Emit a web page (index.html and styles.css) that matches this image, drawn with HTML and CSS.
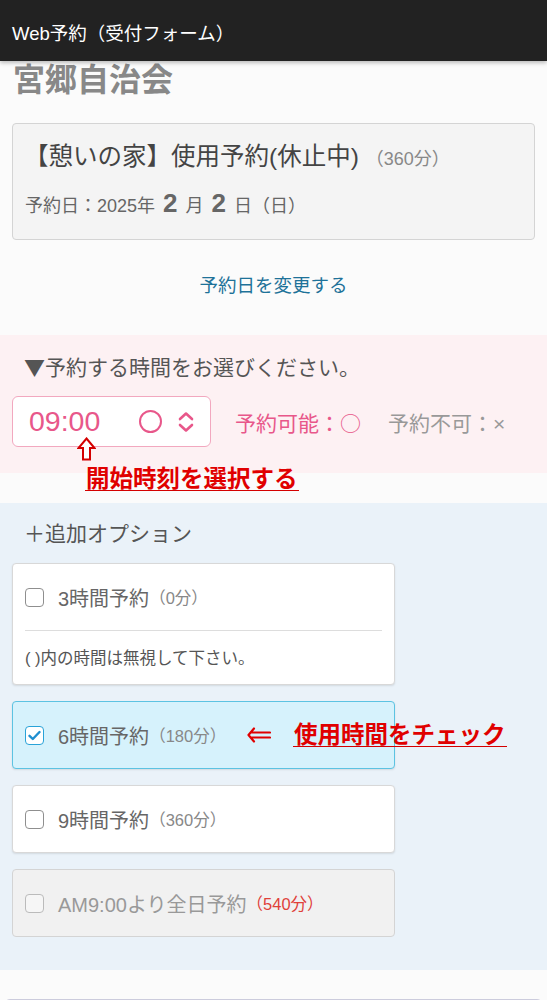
FILE: index.html
```html
<!DOCTYPE html>
<html lang="ja">
<head>
<meta charset="utf-8">
<title>Web予約（受付フォーム）</title>
<link rel="stylesheet" href="styles.css">
</head>
<body>
<header class="appbar">Web予約（受付フォーム）</header>
<main class="page">
  <h1 class="org">宮郷自治会</h1>
  <div class="facility">
    <div class="facility-title">【憩いの家】使用予約(休止中)<span class="mins">（360分）</span></div>
    <div class="facility-date">予約日：2025年 <b class="big">2</b> 月 <b class="big">2</b> 日（日）</div>
  </div>
  <div class="change-row"><a class="change-link">予約日を変更する</a></div>

  <section class="time-sec">
    <div class="sec-title"><span class="cj">▼</span>予約する時間をお選びください。</div>
    <div class="time-row">
      <div class="time-select">
        <span class="time-val">09:00</span>
        <span class="time-mark"></span>
        <svg class="chev" width="18" height="22" viewBox="0 0 18 22"><path d="M3 8 L9 2.5 L15 8 M3 14 L9 19.5 L15 14" fill="none" stroke="#e8578a" stroke-width="2.6" stroke-linecap="round" stroke-linejoin="round"/></svg>
      </div>
      <span class="legend ok">予約可能：<span class="cj">○</span></span>
      <span class="legend ng">予約不可：×</span>
    </div>
    <div class="note-start">
      <svg class="up-arrow" width="19" height="24" viewBox="0 0 19 24"><path d="M9.5 1.5 L17.5 11 L13 11 L13 22.5 L6 22.5 L6 11 L1.5 11 Z" fill="#fff" stroke="#d40000" stroke-width="2" stroke-linejoin="miter"/></svg>
      <span class="anno">開始時刻を選択する</span>
    </div>
  </section>

  <section class="opt-sec">
    <div class="sec-title opt-title">＋追加オプション</div>
    <div class="opt">
      <div class="opt-line"><span class="cb"></span><span class="opt-label">3時間予約</span><span class="opt-min">（0分）</span></div>
      <div class="opt-note">( )内の時間は無視して下さい。</div>
    </div>
    <div class="opt-wrap">
      <div class="opt checked">
        <div class="opt-line"><span class="cb on"><svg width="13" height="11" viewBox="0 0 13 11"><path d="M1.5 5.8 L4.8 9 L11.5 2" fill="none" stroke="#1f8fd0" stroke-width="2.4" stroke-linecap="round" stroke-linejoin="round"/></svg></span><span class="opt-label">6時間予約</span><span class="opt-min">（180分）</span></div>
      </div>
      <div class="note-check">
        <svg class="left-arrow" width="24" height="16" viewBox="0 0 24 16"><path d="M7 1.5 L1.5 8 L7 14.5 M4 5.5 L23 5.5 M4 10.5 L23 10.5" fill="none" stroke="#e00000" stroke-width="2.2" stroke-linecap="round" stroke-linejoin="round"/></svg>
        <span class="anno">使用時間をチェック</span>
      </div>
    </div>
    <div class="opt">
      <div class="opt-line"><span class="cb"></span><span class="opt-label">9時間予約</span><span class="opt-min">（360分）</span></div>
    </div>
    <div class="opt disabled">
      <div class="opt-line"><span class="cb"></span><span class="opt-label">AM9:00より全日予約</span><span class="opt-min red">（540分）</span></div>
    </div>
  </section>
  <div class="bottom"><div class="bottom-card"></div></div>
</main>
</body>
</html>
```
FILE: styles.css
```css
* { box-sizing: border-box; }
html, body { margin: 0; padding: 0; }
body {
  width: 547px;
  height: 1000px;
  overflow: hidden;
  background: #fbfbfb;
  font-family: "Liberation Sans", "Noto Sans CJK JP", sans-serif;
  color: #555;
}
.cj { font-family: "Noto Sans CJK JP", sans-serif; }
.appbar {
  height: 61px;
  background: #222;
  color: #fff;
  font-size: 18.5px;
  padding: 21px 0 0 12px;
  line-height: 26px;
  box-shadow: 0 2px 4px rgba(0,0,0,0.25);
  position: relative;
  z-index: 2;
}
.page { display: flex; flex-direction: column; }
.org {
  margin: 0;
  padding: 0 13px;
  font-size: 32px;
  line-height: 38px;
  font-weight: 700;
  color: #888;
  height: 62px;
}
.facility {
  margin: 0 12px;
  height: 117px;
  background: #f4f4f4;
  border: 1px solid #d4d4d4;
  border-radius: 4px;
  padding: 17px 12px 0 12px;
}
.facility-title {
  font-size: 24.5px;
  line-height: 32px;
  color: #444;
  margin-left: -1px;
}
.mins { font-size: 18px; color: #888; margin-left: 7px; }
.facility-date {
  margin-top: 10px;
  font-size: 18px;
  color: #666;
  line-height: 36px;
}
.big { font-size: 26px; font-weight: 700; color: #666; margin: 0 3px; }
.change-row {
  height: 95px;
  padding-bottom: 7px;
  display: flex;
  align-items: center;
  justify-content: center;
}
.change-link { color: #1e7299; font-size: 18.5px; }

.time-sec {
  background: #fdf1f3;
  height: 138px;
  padding: 16px 12px 0;
  position: relative;
}
.sec-title {
  font-size: 21px;
  line-height: 30px;
  color: #555;
  padding-left: 12px;
}
.time-row {
  margin-top: 13px;
  display: flex;
  align-items: center;
}
.time-select {
  width: 199px;
  height: 51px;
  background: #fff;
  border: 1px solid #f2a8bf;
  border-radius: 6px;
  display: flex;
  align-items: center;
  padding-left: 16px;
}
.time-val { font-size: 28.5px; color: #e8578a; width: 110px; }
.time-mark {
  width: 23px; height: 23px;
  border: 2.5px solid #e8578a;
  border-radius: 50%;
  margin-right: 15px;
}
.legend { font-size: 21px; }
.legend.ok { color: #e8578a; margin-left: 24px; }
.legend.ng { color: #999; margin-left: 27px; }
.note-start {
  position: absolute;
  left: 77px;
  top: 102px;
  display: flex;
  flex-direction: column;
  align-items: flex-start;
}
.up-arrow { display: block; }
.anno {
  color: #e00000;
  font-weight: 700;
  font-size: 23.5px;
  line-height: 26px;
  border-bottom: 1.5px solid #d40000;
  padding: 0 1px;
  font-family: "Noto Sans CJK JP", sans-serif;
}
.note-start .anno { margin-left: 8px; margin-top: 3px; }

.opt-sec {
  margin-top: 30px;
  background: #eaf2f9;
  padding: 16px 12px 33px;
  display: flex;
  flex-direction: column;
  gap: 16px;
}
.opt-title { margin-bottom: -2px; }
.opt {
  width: 383px;
  background: #fff;
  border: 1px solid #d8d8d8;
  border-radius: 4px;
  box-shadow: 0 1px 2px rgba(0,0,0,0.1);
  padding: 0 12px;
}
.opt-line {
  height: 66px;
  display: flex;
  align-items: center;
}
.cb {
  width: 19px; height: 19px;
  border: 1px solid #8f8f8f;
  border-radius: 4px;
  background: #fff;
  margin-right: 14px;
  display: flex;
  align-items: center;
  justify-content: center;
}
.cb.on { border-color: #29a3d8; border-width: 1.5px; }
.opt-label { font-size: 20px; color: #666; }
.opt-min { font-size: 16.5px; color: #888; }
.opt-min.red { color: #e0413a; }
.opt-note {
  border-top: 1px solid #ddd;
  font-size: 16.5px;
  color: #555;
  height: 54px;
  display: flex;
  align-items: center;
  padding-bottom: 2px;
}
.opt-wrap { position: relative; }
.opt.checked {
  background: #d6f2fc;
  border-color: #5cc3e2;
}
.note-check {
  position: absolute;
  left: 235px;
  top: 19px;
  display: flex;
  align-items: center;
}
.left-arrow { display: block; margin-right: 22px; margin-top: 2px; }
.opt.disabled { background: #f1f1f1; box-shadow: none; border-color: #d4d4d4; }
.opt.disabled .opt-label { color: #999; }
.opt.disabled .cb { border-color: #bbb; background: #f6f6f6; }
.bottom { padding: 29px 4px 0; }
.bottom-card {
  height: 40px;
  border: 1px solid #ccd;
  border-radius: 6px;
  background: #fff;
}
```
